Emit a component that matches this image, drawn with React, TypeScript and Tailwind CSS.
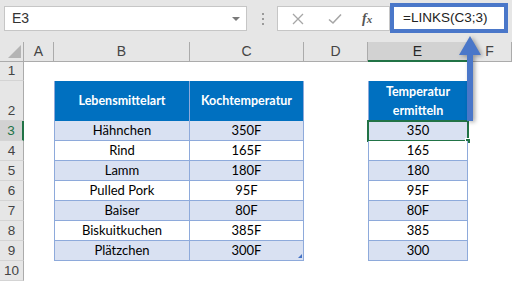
import React from 'react';

const rows = [
    ['Hähnchen', '350F', '350'],
    ['Rind', '165F', '165'],
    ['Lamm', '180F', '180'],
    ['Pulled Pork', '95F', '95F'],
    ['Baiser', '80F', '80F'],
    ['Biskuitkuchen', '385F', '385'],
    ['Plätzchen', '300F', '300'],
];

const colLetters = ['A', 'B', 'C', 'D', 'E', 'F'];

function RowHead({ n, active }: { n: number; active?: boolean }) {
    return (
        <div
            className={`flex items-end justify-center border-b border-r border-[#d4d4d4] pb-[1px] text-[13.5px] leading-[17px] ${
                active
                    ? 'border-r-2 border-r-[#217346] bg-[#d2d2d2] text-[#217346]'
                    : 'border-r-[#ababab] bg-[#e6e6e6] text-[#444]'
            }`}
        >
            {n}
        </div>
    );
}

export default function App() {
    return (
        <div className="relative h-[281px] w-[512px] overflow-hidden bg-white font-['Segoe_UI','Liberation_Sans',sans-serif]">
            {/* formula bar */}
            <div className="flex h-[42px] items-start bg-[#e6e6e6]">
                <div className="ml-[4px] mt-[6px] flex h-[25px] w-[243px] items-center justify-between border border-[#c6c6c6] bg-white pl-[7px] pr-[6px]">
                    <span className="text-[14px] text-[#333]">E3</span>
                    <span className="h-0 w-0 border-x-[4px] border-t-[4px] border-x-transparent border-t-[#7a7a7a]" />
                </div>
                <div className="ml-[15px] mt-[13px] flex flex-col gap-[3px]">
                    <span className="h-[2px] w-[2px] bg-[#9a9a9a]" />
                    <span className="h-[2px] w-[2px] bg-[#9a9a9a]" />
                    <span className="h-[2px] w-[2px] bg-[#9a9a9a]" />
                </div>
                <div className="ml-[13px] mt-[6px] flex h-[25px] w-[113px] items-center border border-[#c6c6c6] bg-white">
                    <svg width="12" height="12" viewBox="0 0 12 12" className="ml-[14px]">
                        <path d="M1 1L11 11M11 1L1 11" stroke="#a6a6a6" strokeWidth="1.3" />
                    </svg>
                    <svg width="14" height="12" viewBox="0 0 14 12" className="ml-[24px]">
                        <path d="M1 6.5L5 10L13 1.5" stroke="#a6a6a6" strokeWidth="1.6" fill="none" />
                    </svg>
                    <span className="ml-[20px] font-['Liberation_Serif',serif] text-[14px] font-bold italic text-[#555]">
                        f<span className="text-[11px]">x</span>
                    </span>
                </div>
                <div className="mt-[3px] flex h-[30px] w-[118px] items-center border-[4px] border-[#4a77c9] bg-white pl-[9px]">
                    <span className="font-['Liberation_Sans',sans-serif] text-[13.5px] text-[#222]">=LINKS(C3;3)</span>
                </div>
            </div>

            {/* sheet */}
            <div className="grid grid-cols-[24px_30px_136px_114px_64px_100px_1fr] grid-rows-[20px_19px_40px_repeat(8,20px)]">
                {/* column headers */}
                <div className="relative border-b border-r border-[#ababab] bg-[#e6e6e6]">
                    <span className="absolute bottom-[3px] right-[2px] h-0 w-0 border-b-[13px] border-l-[13px] border-b-[#b4b4b4] border-l-transparent" />
                </div>
                {colLetters.map((c) => (
                    <div
                        key={c}
                        className={`flex items-center justify-center border-r text-[14px] ${
                            c === 'E'
                                ? 'border-b-2 border-b-[#217346] border-r-[#ababab] bg-[#d2d2d2] text-[#262626]'
                                : 'border-b border-[#ababab] bg-[#e6e6e6] text-[#444]'
                        }`}
                    >
                        {c}
                    </div>
                ))}

                {/* row 1 */}
                <RowHead n={1} />
                <div className="col-span-6" />

                {/* row 2 headers */}
                <RowHead n={2} />
                <div />
                <div className="flex items-center justify-center border-x border-[#8eaadb] bg-[#0070c0] font-['Lato',sans-serif] text-[12.5px] font-bold text-white">
                    Lebensmittelart
                </div>
                <div className="flex items-center justify-center border-r border-[#8eaadb] bg-[#0070c0] font-['Lato',sans-serif] text-[12.5px] font-bold text-white">
                    Kochtemperatur
                </div>
                <div />
                <div className="flex flex-col items-center justify-center border-x border-[#8eaadb] bg-[#0070c0] font-['Lato',sans-serif] text-[12.5px] font-bold leading-[19px] text-white">
                    <span>Temperatur</span>
                    <span>ermitteln</span>
                </div>
                <div />

                {rows.map((r, i) => {
                    const band = i % 2 === 0 ? 'bg-[#d9e1f2]' : 'bg-white';
                    const cell = `flex items-center justify-center border-b border-[#8eaadb] font-['Lato',sans-serif] text-[13px] text-black ${band}`;
                    return (
                        <React.Fragment key={r[0]}>
                            <RowHead n={i + 3} active={i === 0} />
                            <div />
                            <div className={`${cell} border-x`}>{r[0]}</div>
                            <div className={`${cell} relative border-r`}>
                                {r[1]}
                                {i === rows.length - 1 && (
                                    <span className="absolute bottom-[2px] right-[1px] h-0 w-0 border-b-[4px] border-l-[4px] border-b-[#4472c4] border-l-transparent" />
                                )}
                            </div>
                            <div />
                            <div className={`${cell} relative border-x`}>
                                {r[2]}
                                {i === 0 && (
                                    <>
                                        <span className="absolute -left-[2px] -top-[1px] h-[22px] w-[102px] border-2 border-[#217346]" />
                                        <span className="absolute -bottom-[4px] -right-[4px] h-[6px] w-[6px] border border-white bg-[#217346]" />
                                    </>
                                )}
                            </div>
                            <div />
                        </React.Fragment>
                    );
                })}

                {/* row 10 */}
                <RowHead n={10} />
                <div className="col-span-6" />
            </div>

            {/* arrow pointing to formula */}
            <svg
                width="30"
                height="92"
                viewBox="0 0 30 92"
                className="absolute left-[456px] top-[33px] drop-shadow-[2px_1px_2px_rgba(0,0,0,0.35)]"
            >
                <path d="M14 3L25 22H17V88H11V22H3Z" fill="#4a77c9" />
            </svg>
        </div>
    );
}
